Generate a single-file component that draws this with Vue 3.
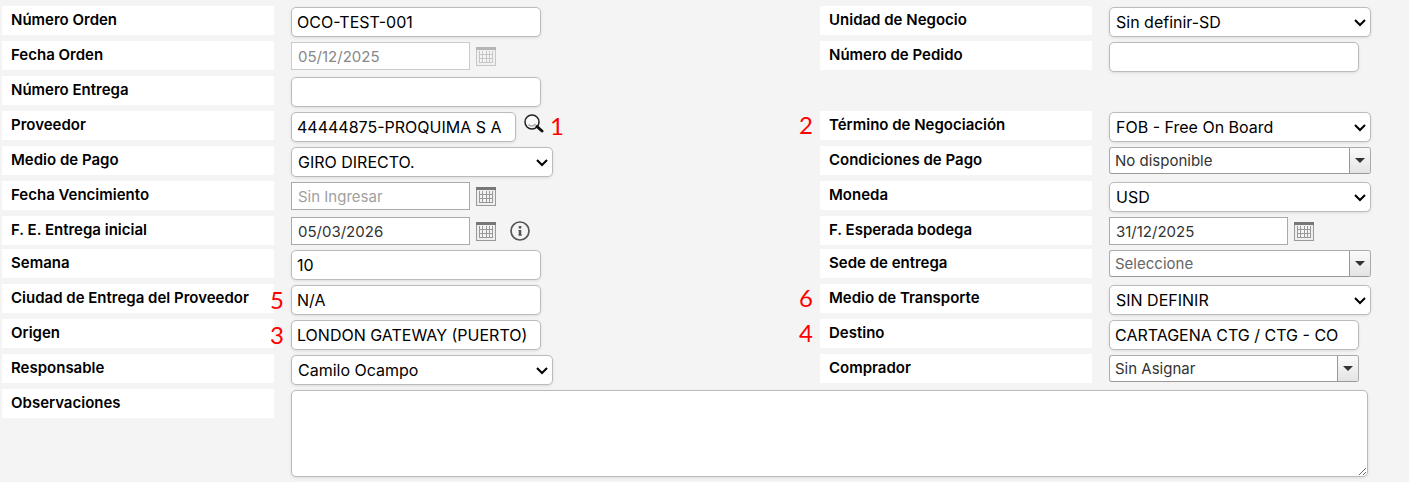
<script setup>
import { reactive } from 'vue'

const rows = reactive([
  [
    { id: 'numero-orden', label: 'Número Orden', type: 'text', value: 'OCO-TEST-001' },
    { id: 'unidad-negocio', label: 'Unidad de Negocio', type: 'select', value: 'Sin definir-SD' }
  ],
  [
    { id: 'fecha-orden', label: 'Fecha Orden', type: 'date', value: '05/12/2025', disabled: true },
    { id: 'numero-pedido', label: 'Número de Pedido', type: 'text', value: '' }
  ],
  [
    { id: 'numero-entrega', label: 'Número Entrega', type: 'text', value: '' }
  ],
  [
    { id: 'proveedor', label: 'Proveedor', type: 'search', value: '44444875-PROQUIMA S A', step: 1 },
    { id: 'termino', label: 'Término de Negociación', type: 'select', value: 'FOB - Free On Board', step: 2 }
  ],
  [
    { id: 'medio-pago', label: 'Medio de Pago', type: 'select', value: 'GIRO DIRECTO.' },
    { id: 'condiciones-pago', label: 'Condiciones de Pago', type: 'combo', value: 'No disponible' }
  ],
  [
    { id: 'fecha-vencimiento', label: 'Fecha Vencimiento', type: 'date', value: '', placeholder: 'Sin Ingresar' },
    { id: 'moneda', label: 'Moneda', type: 'select', value: 'USD' }
  ],
  [
    { id: 'entrega-inicial', label: 'F. E. Entrega inicial', type: 'date', value: '05/03/2026', info: true },
    { id: 'esperada-bodega', label: 'F. Esperada bodega', type: 'date', value: '31/12/2025' }
  ],
  [
    { id: 'semana', label: 'Semana', type: 'text', value: '10' },
    { id: 'sede-entrega', label: 'Sede de entrega', type: 'combo', value: 'Seleccione', empty: true }
  ],
  [
    { id: 'ciudad-entrega', label: 'Ciudad de Entrega del Proveedor', type: 'text', value: 'N/A', step: 5 },
    { id: 'medio-transporte', label: 'Medio de Transporte', type: 'select', value: 'SIN DEFINIR', step: 6 }
  ],
  [
    { id: 'origen', label: 'Origen', type: 'text', value: 'LONDON GATEWAY (PUERTO)', step: 3 },
    { id: 'destino', label: 'Destino', type: 'text', value: 'CARTAGENA CTG / CTG - CO', step: 4 }
  ],
  [
    { id: 'responsable', label: 'Responsable', type: 'select', value: 'Camilo Ocampo' },
    { id: 'comprador', label: 'Comprador', type: 'combo', value: 'Sin Asignar', narrow: true }
  ]
])
</script>

<template>
  <form class="order-form" @submit.prevent>
    <div v-for="(row, index) in rows" :key="index" class="row">
      <template v-for="(field, side) in row" :key="field.id">
        <div class="label-cell">
          <label :for="field.id">{{ field.label }}</label>
          <span
            v-if="field.step && field.type !== 'search'"
            :class="['step', side === 0 ? 'step-after' : 'step-before']"
          >{{ field.step }}</span>
        </div>

        <div class="field">
          <input v-if="field.type === 'text'" :id="field.id" v-model="field.value" type="text" class="control">

          <div v-else-if="field.type === 'select'" class="select">
            <select :id="field.id" v-model="field.value" class="control">
              <option :value="field.value">{{ field.value }}</option>
            </select>
            <svg class="chevron" width="12" height="8" viewBox="0 0 12 8">
              <path d="M1 1l5 5 5-5" fill="none" stroke="#000" stroke-width="2" />
            </svg>
          </div>

          <div v-else-if="field.type === 'combo'" :class="['combo', { narrow: field.narrow }]">
            <select :id="field.id" v-model="field.value" :class="{ empty: field.empty }">
              <option :value="field.value">{{ field.value }}</option>
            </select>
            <span class="combo-arrow"></span>
          </div>

          <template v-else-if="field.type === 'search'">
            <input :id="field.id" v-model="field.value" type="text" class="control provider">
            <button type="button" class="icon-button search" aria-label="Buscar proveedor">
              <svg width="20" height="20" viewBox="0 0 20 20">
                <circle cx="8" cy="8" r="7" fill="#fafafa" stroke="#222" stroke-width="1.5" />
                <path d="M4.5 10.5c1.5 2 5 2.2 7-.5" fill="none" stroke="#aaa" stroke-width="1.5" />
                <path d="M13 12.5l5 4.5" stroke="#111" stroke-width="3" stroke-linecap="round" />
              </svg>
            </button>
            <span class="step">{{ field.step }}</span>
          </template>

          <template v-else>
            <input
              :id="field.id"
              v-model="field.value"
              type="text"
              class="date"
              :placeholder="field.placeholder"
              :disabled="field.disabled"
            >
            <button type="button" class="icon-button calendar" :disabled="field.disabled" aria-label="Abrir calendario">
              <svg width="20" height="19" viewBox="0 0 20 19">
                <rect x=".5" y=".5" width="19" height="18" fill="#eee" stroke="#999" />
                <path d="M0 1.5h20" stroke="#777" stroke-width="3" />
                <rect x="3" y="4" width="14" height="12" fill="#999" />
                <path
                  d="M4 4h2v3H4zM7 4h3v3H7zM11 4h2v3h-2zM14 4h2v3h-2zM4 8h2v3H4zM7 8h3v3H7zM11 8h2v3h-2zM14 8h2v3h-2zM4 12h2v3H4zM7 12h3v3H7zM11 12h2v3h-2zM14 12h2v3h-2z"
                  fill="#f4f4f4"
                />
              </svg>
            </button>
            <button v-if="field.info" type="button" class="icon-button info" aria-label="Información">
              <svg width="20" height="20" viewBox="0 0 20 20">
                <circle cx="10" cy="10" r="9" fill="none" stroke="#555" stroke-width="1.7" />
                <path d="M10 5v2.5M10 9v5.5" fill="none" stroke="#555" stroke-width="2.5" />
                <path d="M8.500 9.500H10M8.500 14h3.500" fill="none" stroke="#555" />
              </svg>
            </button>
          </template>
        </div>
      </template>
    </div>

    <div class="row">
      <div class="label-cell">
        <label for="observaciones">Observaciones</label>
      </div>
      <div class="field notes">
        <textarea id="observaciones"></textarea>
      </div>
    </div>
  </form>
</template>

<style>
body {
  margin: 0;
  background: #f4f4f4;
}
</style>

<style scoped>
.order-form {
  display: flex;
  flex-direction: column;
  gap: 4px;
  padding: 6px 0 4px 2px;
  font-family: Inter, "Liberation Sans", sans-serif;
  color: #000;
}

.row {
  display: grid;
  grid-template-columns: minmax(0, 272fr) minmax(0, 512fr) minmax(0, 272fr) minmax(0, 300fr);
  column-gap: 17px;
  align-items: start;
}

.label-cell {
  position: relative;
  box-sizing: border-box;
  min-height: 29px;
  padding: 4px 9px;
  background: #fff;
}

label {
  display: block;
  font-size: 15px;
  font-weight: 600;
  line-height: 20px;
}

.field {
  display: flex;
  align-items: flex-start;
  padding-top: 1px;
}

.control,
.date,
.combo,
textarea {
  box-sizing: border-box;
  min-width: 0;
  max-width: 100%;
  background: #fff;
}

.control {
  width: 250px;
  height: 30px;
  padding: 0 5px;
  border: 1px solid #bbb;
  border-radius: 5px;
  box-shadow: 0 1px 3px rgba(0, 0, 0, 0.1);
  font-family: inherit;
  font-size: 16px;
  color: #000;
}

.select {
  position: relative;
  width: 262px;
  max-width: 100%;
}

select.control {
  display: block;
  width: 100%;
  padding: 0 24px 0 6px;
  appearance: none;
}

.chevron {
  position: absolute;
  top: 12px;
  right: 5px;
  pointer-events: none;
}

.control.provider {
  width: 225px;
}

.date {
  width: 179px;
  height: 28px;
  padding: 0 6px;
  border: 1px solid #aaa;
  font-family: inherit;
  font-size: 15px;
  color: #333;
}

.date::placeholder {
  color: #a0a0a0;
}

.date:disabled {
  border-color: #ccc;
  color: #888;
}

.combo {
  position: relative;
  width: 262px;
  height: 27px;
  border: 1px solid #aaa;
  border-bottom-color: #999;
  border-radius: 3px;
  overflow: hidden;
}

.combo.narrow {
  width: 250px;
}

.combo select {
  display: block;
  width: 100%;
  height: 100%;
  padding: 0 26px 0 5px;
  border: 0;
  appearance: none;
  background: transparent;
  font-family: inherit;
  font-size: 15px;
  color: #333;
}

.combo select.empty {
  color: #666;
}

/* Botón desplegable del combo */
.combo-arrow {
  position: absolute;
  inset: 0 0 0 auto;
  display: flex;
  align-items: center;
  justify-content: center;
  width: 20px;
  border-left: 1px solid #999;
  background: linear-gradient(#fafafa, #e4e4e4);
  pointer-events: none;
}

.combo-arrow::after {
  content: '';
  border: 5px solid transparent;
  border-top-color: #333;
  border-bottom-width: 0;
}

.icon-button {
  display: flex;
  padding: 0;
  border: 0;
  background: none;
  cursor: pointer;
}

.calendar {
  margin: 5px 0 0 6px;
}

.calendar:disabled {
  opacity: 0.5;
}

.info {
  margin: 4px 0 0 14px;
}

.search {
  margin: 2px 6px 0 8px;
}

.step {
  font-family: Lato, sans-serif;
  font-size: 24px;
  line-height: 28px;
  color: #f00;
}

.step-after,
.step-before {
  position: absolute;
}

.step-after {
  top: 2px;
  right: -10px;
}

.step-before {
  top: 0;
  left: -21px;
}

.notes {
  grid-column: 2 / -1;
  padding-right: 41px;
}

textarea {
  width: 100%;
  height: 87px;
  padding: 4px;
  border: 1px solid #bbb;
  border-radius: 5px;
  box-shadow: 0 1px 3px rgba(0, 0, 0, 0.1);
  font-family: inherit;
  font-size: 16px;
}
</style>
